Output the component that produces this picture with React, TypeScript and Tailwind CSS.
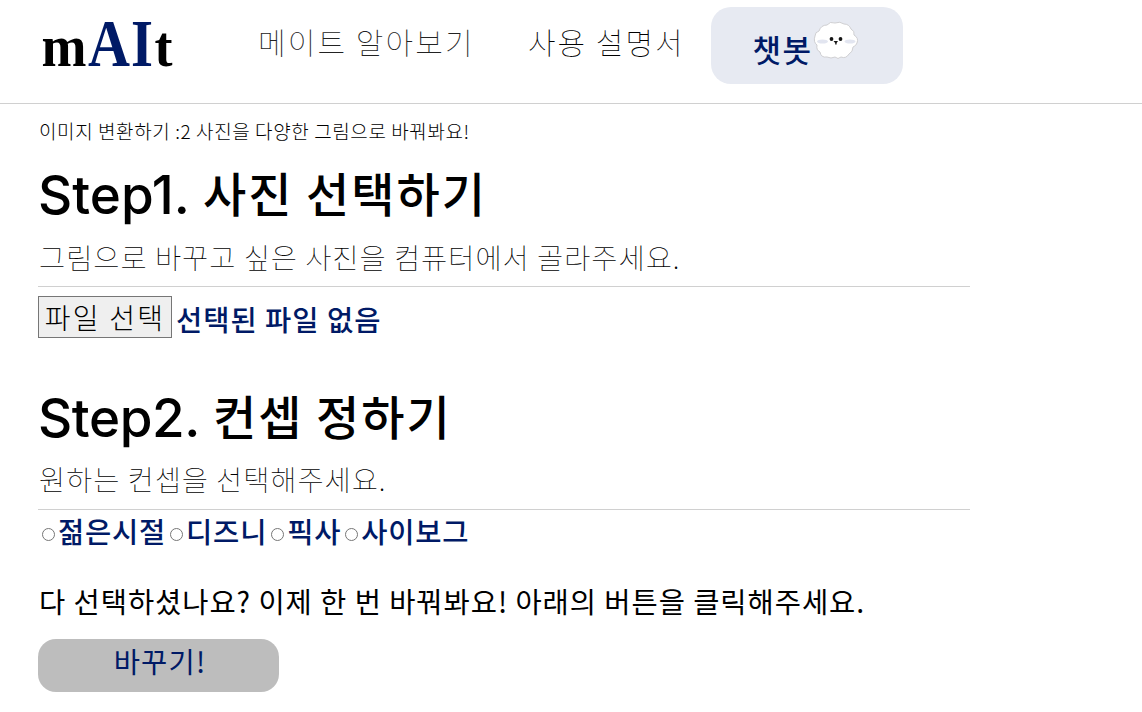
import React from 'react';

const concepts = ['젊은시절', '디즈니', '픽사', '사이보그'];

function Logo() {
  return (
    <svg width="134" height="68" viewBox="0 -10 134 68" className="shrink-0 overflow-visible font-['Liberation_Serif',serif] font-bold">
      <text x="1.5" y="48" fontSize="59" textLength="45" lengthAdjust="spacingAndGlyphs">m</text>
      <text x="48" y="48" fontSize="68.5" textLength="42" lengthAdjust="spacingAndGlyphs" fill="#001a66">A</text>
      <text x="91" y="48" fontSize="68.5" textLength="22" lengthAdjust="spacingAndGlyphs" fill="#001a66">I</text>
      <text x="114.5" y="48" fontSize="56" textLength="18" lengthAdjust="spacingAndGlyphs">t</text>
    </svg>
  );
}

function Mascot() {
  return (
    <svg width="46" height="40" viewBox="0 0 46 40" className="shrink-0">
      <path
        d="M14 4 Q17 0 22 2 Q27 0 31 3 Q36 3 38 8 Q42 10 41 14 Q46 17 44 22 Q43 25 40 26 Q40 31 36 33 Q33 38 28 36 Q25 39 22 36 Q18 38 14 36 Q8 37 7 31 Q3 29 4 24 Q0 21 2 15 Q2 11 6 10 Q8 4 14 4Z"
        fill="#fff"
        stroke="#cfcfd2"
        strokeWidth="1"
      />
      <ellipse cx="9.5" cy="20.5" rx="5.5" ry="2" fill="#e2e5f0" />
      <ellipse cx="37" cy="20.5" rx="5.5" ry="2" fill="#e2e5f0" />
      <circle cx="18.5" cy="18" r="1.9" fill="#151515" />
      <circle cx="27.5" cy="18" r="1.9" fill="#151515" />
      <path d="M20.5 20h4.5l-1.4 2v1.6h-1.4v-1.6z" fill="#151515" />
    </svg>
  );
}

export default function App() {
  return (
    <div className="h-[712px] w-full overflow-hidden bg-white font-['Noto_Sans_CJK_KR',sans-serif] text-black">
      <header className="flex h-[104px] items-start border-b border-[#d0d0d0] pl-10">
        <div className="mt-2">
          <Logo />
        </div>
        <nav className="flex whitespace-nowrap text-[30px] leading-[44px] font-thin">
          <a className="mt-[19px] ml-[84px] w-[270px] tracking-[2.1px] text-[#222]">메이트 알아보기</a>
          <a className="mt-[19px] w-[183px] tracking-[2px]">사용 설명서</a>
        </nav>
        <button className="mt-[7px] flex h-[77px] w-[192px] items-start rounded-[20px] bg-[#e7eaf2] pl-[41px] font-medium text-[#001a66]">
          <span className="mt-[20px] w-[61px] text-[31px] leading-[44px] tracking-[1.5px] whitespace-nowrap">챗봇</span>
          <span className="mt-[14px]">
            <Mascot />
          </span>
        </button>
      </header>

      <main className="w-[970px] pl-[38px] whitespace-nowrap">
        <p className="pt-[13px] pl-px text-[19px] leading-[28px] font-light tracking-[0.6px]">
          이미지 변환하기 :2 사진을 다양한 그림으로 바꿔봐요!
        </p>

        <section>
          <h1 className="mt-[15px] flex h-[70px] text-[47px] leading-[64px] font-medium tracking-[2px]">
            <span className="w-[165px] font-['Inter',sans-serif] text-[53px] leading-[71px] font-medium tracking-[0px]">Step1.</span>
            사진 선택하기
          </h1>
          <p className="mt-[7px] pl-px text-[28.5px] leading-[40px] font-thin tracking-[0.95px]">
            그림으로 바꾸고 싶은 사진을 컴퓨터에서 골라주세요.
          </p>
          <hr className="mt-[9px] border-[#d0d0d0]" />
          <div className="mt-[9px] flex items-start">
            <button className="flex h-[42px] w-[134px] items-center justify-center border border-[#767676] bg-[#efefef] text-[28px] leading-[40px] font-light tracking-[2.3px]">
              파일 선택
            </button>
            <span className="mt-[3px] ml-[4px] text-[28.5px] leading-[40px] font-medium tracking-[1px] text-[#001a66]">
              선택된 파일 없음
            </span>
          </div>
        </section>

        <section>
          <h1 className="mt-[44px] flex h-[70px] text-[47px] leading-[64px] font-medium tracking-[2px]">
            <span className="w-[175px] font-['Inter',sans-serif] text-[53px] leading-[71px] font-medium tracking-[-0.4px]">Step2.</span>
            컨셉 정하기
          </h1>
          <p className="mt-[6px] pl-px text-[28.5px] leading-[40px] font-thin tracking-[0.9px]">원하는 컨셉을 선택해주세요.</p>
          <hr className="mt-[10px] border-[#d0d0d0]" />
          <div className="flex pt-[1px] pl-[4px] text-[28.5px] leading-[40px] font-medium tracking-[0.8px] text-[#001a66]">
            {concepts.map((name) => (
              <label key={name} className="mr-[4px] flex">
                <span className="mt-[17px] mr-[3px] h-[13px] w-[13px] shrink-0 rounded-full border border-[#767676]" />
                {name}
              </label>
            ))}
          </div>
        </section>

        <p className="mt-[30px] pl-px text-[28.5px] leading-[40px] tracking-[0.96px]">
          다 선택하셨나요? 이제 한 번 바꿔봐요! 아래의 버튼을 클릭해주세요.
        </p>
        <button className="mt-[18px] flex h-[53px] w-[241px] justify-center rounded-[18px] bg-[#bdbdbd] pl-[3px] text-[28.5px] leading-[44px] tracking-[1.2px] text-[#001a66]">
          바꾸기!
        </button>
      </main>
    </div>
  );
}
